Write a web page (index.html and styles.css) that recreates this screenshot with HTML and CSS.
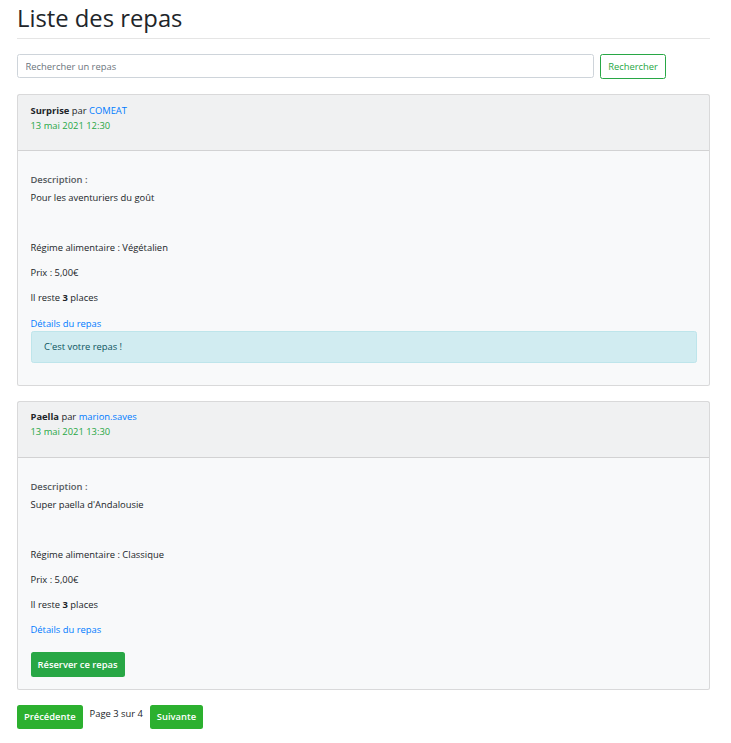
FILE: index.html
```html
<!DOCTYPE html>
<html lang="fr">
<head>
<meta charset="utf-8">
<title>Liste des repas</title>
<link rel="stylesheet" href="styles.css">
</head>
<body>
<div class="container">
  <h1 class="title">Liste des repas</h1>
  <hr class="sep">
  <form class="search">
    <input class="search-input" type="text" placeholder="Rechercher un repas">
    <button class="btn btn-outline" type="button">Rechercher</button>
  </form>

  <div class="card">
    <div class="card-header">
      <div class="line"><strong>Surprise</strong> par <a class="link" href="#">COMEAT</a></div>
      <div class="line date">13 mai 2021 12:30</div>
    </div>
    <div class="card-body">
      <div class="label">Description :</div>
      <p class="desc">Pour les aventuriers du goût</p>
      <p class="row first">Régime alimentaire : Végétalien</p>
      <p class="row">Prix : 5,00€</p>
      <p class="row">Il reste <strong>3</strong> places</p>
      <a class="link details" href="#">Détails du repas</a>
      <div class="alert">C'est votre repas !</div>
    </div>
  </div>

  <div class="card">
    <div class="card-header">
      <div class="line"><strong>Paella</strong> par <a class="link" href="#">marion.saves</a></div>
      <div class="line date">13 mai 2021 13:30</div>
    </div>
    <div class="card-body">
      <div class="label">Description :</div>
      <p class="desc">Super paella d'Andalousie</p>
      <p class="row first">Régime alimentaire : Classique</p>
      <p class="row">Prix : 5,00€</p>
      <p class="row">Il reste <strong>3</strong> places</p>
      <a class="link details" href="#">Détails du repas</a>
      <div class="actions"><button class="btn btn-success" type="button">Réserver ce repas</button></div>
    </div>
  </div>

  <div class="pager">
    <button class="btn btn-page" type="button">Précédente</button>
    <span class="page-info">Page 3 sur 4</span>
    <button class="btn btn-page" type="button">Suivante</button>
  </div>
</div>
</body>
</html>
```

FILE: styles.css
```css
* { box-sizing: border-box; }
html, body { margin: 0; padding: 0; background: #fff; }
body {
  font-family: "Open Sans", "Noto Sans", Arial, sans-serif;
  font-size: 9.4px;
  line-height: 15px;
  color: #212529;
}
.container {
  width: 710px;
  padding-left: 17px;
}
.title {
  margin: 3px 0 5px;
  font-size: 23.8px;
  line-height: 30px;
  font-weight: 500;
  color: #212529;
}
.sep {
  margin: 0 0 15px;
  border: 0;
  border-top: 1px solid rgba(0,0,0,0.1);
}
.search {
  display: flex;
  gap: 6px;
  align-items: flex-start;
  margin: 0;
}
.search-input {
  width: 577px;
  height: 24px;
  padding: 0 7.5px;
  border: 1px solid #ced4da;
  border-radius: 2.5px;
  font-family: inherit;
  font-size: 9.4px;
  color: #495057;
  background: #fff;
}
.search-input::placeholder { color: #6c757d; }
.btn {
  font-family: inherit;
  font-size: 9.4px;
  line-height: 15px;
  padding: 4px 7.5px;
  border-radius: 2.5px;
  border: 1px solid transparent;
  cursor: pointer;
}
.btn-outline {
  height: 25px;
  width: 66px;
  padding: 0;
  color: #28a745;
  background: #fff;
  border-color: #28a745;
}
.card {
  margin-top: 15px;
  border: 1px solid rgba(0,0,0,0.125);
  border-radius: 2.5px;
  background: #f8f9fa;
}
.card-header {
  padding: 7.5px 12.5px 17.5px;
  background: rgba(0,0,0,0.03);
  border-bottom: 1px solid rgba(0,0,0,0.125);
}
.line { height: 15px; }
.date { color: #28a745; }
.link { color: #007bff; text-decoration: none; }
.card-body {
  padding: 21px 12.5px 12px;
}
.label {
  font-weight: 600;
  color: #55595e;
}
.desc { margin: 3px 0 0; }
.row { margin: 10px 0 0; }
.row.first { margin-top: 35px; }
.details { display: block; margin-top: 10.5px; }
.alert {
  margin-bottom: 10px;
  padding: 7.5px 12.5px;
  background: #d1ecf1;
  border: 1px solid #bee5eb;
  border-radius: 2.5px;
  color: #0c5460;
}
.actions { margin-top: 14.5px; }
.btn-success {
  height: 25px;
  padding: 0 6px;
  background: #28a745;
  color: #fff;
  font-weight: 600;
}
.pager {
  display: flex;
  align-items: flex-start;
  gap: 7px;
  margin-top: 15px;
}
.btn-page {
  height: 24.5px;
  padding: 0 6px;
  background: #2cb02f;
  color: #fff;
  font-weight: 600;
}
.page-info {
  padding-top: 1px;
}
```
